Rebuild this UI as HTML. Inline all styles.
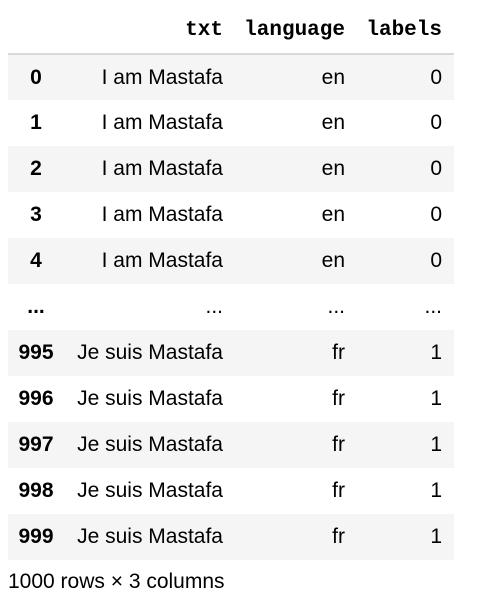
<!DOCTYPE html>
<html><head><style>
body{margin:0;background:#fff;font-family:"Liberation Sans",Arial,sans-serif;color:#000;}
table{position:absolute;left:8px;top:0;border-collapse:collapse;width:446px;font-size:21px;}
th,td{padding:0 12px 0 0;text-align:right;height:46px;box-sizing:border-box;}
thead th{font-family:"Liberation Mono",monospace;font-size:21px;font-weight:bold;height:54px;border-bottom:2px solid #d9d9d9;padding-top:8px;}
tbody th{font-weight:bold;text-align:center;padding:0;width:56px;}
tbody tr:nth-child(odd){background:#f5f5f5;}
.c1{width:171px}.c2{width:122px}
.f{position:absolute;left:8px;top:570px;font-size:21px;}
</style></head><body>
<table>
<thead><tr><th></th><th class="c1">txt</th><th class="c2">language</th><th>labels</th></tr></thead>
<tbody>
<tr><th>0</th><td>I am Mastafa</td><td>en</td><td>0</td></tr>
<tr><th>1</th><td>I am Mastafa</td><td>en</td><td>0</td></tr>
<tr><th>2</th><td>I am Mastafa</td><td>en</td><td>0</td></tr>
<tr><th>3</th><td>I am Mastafa</td><td>en</td><td>0</td></tr>
<tr><th>4</th><td>I am Mastafa</td><td>en</td><td>0</td></tr>
<tr><th>...</th><td>...</td><td>...</td><td>...</td></tr>
<tr><th>995</th><td>Je suis Mastafa</td><td>fr</td><td>1</td></tr>
<tr><th>996</th><td>Je suis Mastafa</td><td>fr</td><td>1</td></tr>
<tr><th>997</th><td>Je suis Mastafa</td><td>fr</td><td>1</td></tr>
<tr><th>998</th><td>Je suis Mastafa</td><td>fr</td><td>1</td></tr>
<tr><th>999</th><td>Je suis Mastafa</td><td>fr</td><td>1</td></tr>
</tbody></table>
<div class="f">1000 rows × 3 columns</div>
</body></html>
